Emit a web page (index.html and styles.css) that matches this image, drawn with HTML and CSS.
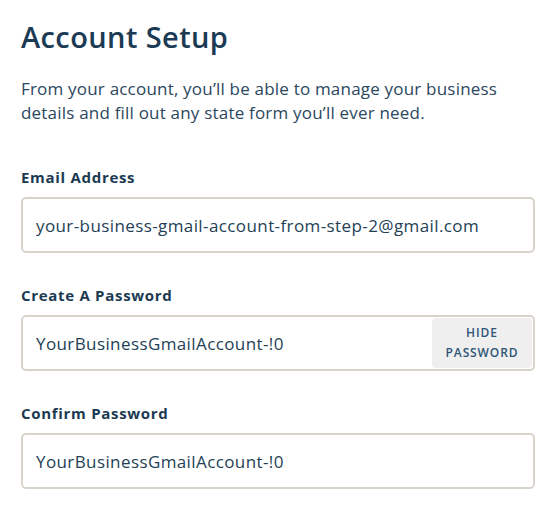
FILE: index.html
```html
<!DOCTYPE html>
<html lang="en">
<head>
<meta charset="utf-8">
<title>Account Setup</title>
<link rel="stylesheet" href="styles.css">
</head>
<body>
<main class="setup">
  <h1 class="title">Account Setup</h1>
  <p class="intro">From your account, you’ll be able to manage your business details and fill out any state form you’ll ever need.</p>

  <div class="field">
    <label class="label" for="email">Email Address</label>
    <div class="box">
      <input class="input" id="email" type="text" value="your-business-gmail-account-from-step-2@gmail.com">
    </div>
  </div>

  <div class="field">
    <label class="label" for="pw">Create A Password</label>
    <div class="box">
      <input class="input" id="pw" type="text" value="YourBusinessGmailAccount-!0">
      <button class="toggle" type="button">Hide<br>Password</button>
    </div>
  </div>

  <div class="field">
    <label class="label" for="pw2">Confirm Password</label>
    <div class="box">
      <input class="input" id="pw2" type="text" value="YourBusinessGmailAccount-!0">
    </div>
  </div>
</main>
</body>
</html>
```
FILE: styles.css
```css
html, body {
  margin: 0;
  padding: 0;
  background: #ffffff;
}

body {
  font-family: "Open Sans", "DejaVu Sans", sans-serif;
  color: #1d3a52;
}

.setup {
  display: flex;
  flex-direction: column;
  padding: 19px 25px 0 21px;
}

.title {
  margin: 0;
  font-size: 29px;
  line-height: 36px;
  font-weight: 600;
  color: #1b3a54;
  letter-spacing: 0.4px;
}

.intro {
  margin: 22px 0 0 0;
  font-size: 17px;
  line-height: 24px;
  color: #2b475e;
  letter-spacing: 0.2px;
}

.field {
  display: flex;
  flex-direction: column;
  margin-top: 42px;
}

.field + .field {
  margin-top: 32px;
}

.label {
  font-size: 15px;
  line-height: 20px;
  font-weight: 700;
  color: #1b3a52;
  letter-spacing: 0.7px;
  margin-bottom: 10px;
}

.box {
  display: flex;
  align-items: center;
  height: 56px;
  box-sizing: border-box;
  border: 2px solid #d8d3cb;
  border-radius: 5px;
  padding: 1px;
}

.input {
  flex: 1;
  min-width: 0;
  border: 0;
  outline: none;
  background: transparent;
  font-family: "Open Sans", "DejaVu Sans", sans-serif;
  font-size: 17px;
  letter-spacing: 0.4px;
  color: #243f55;
  padding: 0 0 0 12px;
  height: 100%;
}

.toggle {
  align-self: stretch;
  width: 100px;
  border: 0;
  border-radius: 4px;
  background: #efefef;
  font-family: "Open Sans", "DejaVu Sans", sans-serif;
  font-size: 12px;
  line-height: 20px;
  font-weight: 600;
  text-transform: uppercase;
  color: #2d5677;
  letter-spacing: 0.9px;
  padding: 0;
}
```
